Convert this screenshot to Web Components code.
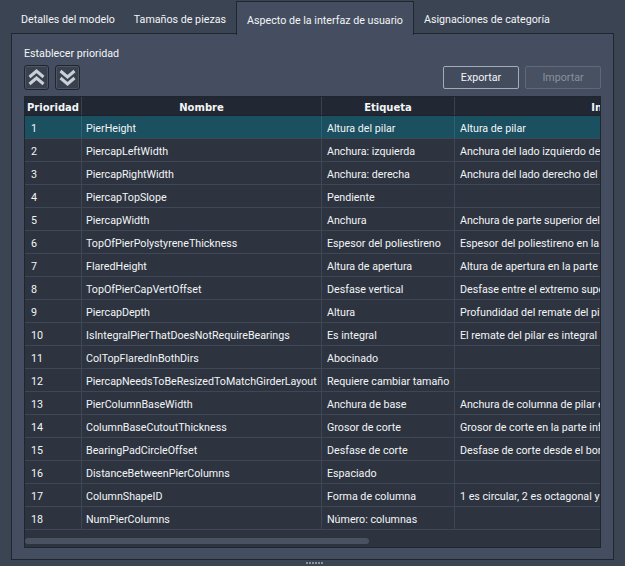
<!DOCTYPE html>
<html>
<head>
<meta charset="utf-8">
<style>
  html, body { margin: 0; height: 100%; }
  body {
    background: #3b4453;
    color: #f3f5f7;
    font: 10.7px/13px Roboto, "Liberation Sans", sans-serif;
    overflow: hidden;
  }
</style>
</head>
<body>
<app-window>
  <tab-item slot="tabs" style="--tab-end: 8px">Detalles del modelo</tab-item>
  <tab-item slot="tabs" style="--tab-end: 9px">Tamaños de piezas</tab-item>
  <tab-item slot="tabs" active>Aspecto de la interfaz de usuario</tab-item>
  <tab-item slot="tabs" style="--tab-start: 9px">Asignaciones de categoría</tab-item>
  <priority-toolbar></priority-toolbar>
  <data-grid></data-grid>
</app-window>

<script>
const rows = [
  ["1", "PierHeight", "Altura del pilar", "Altura de pilar"],
  ["2", "PiercapLeftWidth", "Anchura: izquierda", "Anchura del lado izquierdo del remate"],
  ["3", "PiercapRightWidth", "Anchura: derecha", "Anchura del lado derecho del remate"],
  ["4", "PiercapTopSlope", "Pendiente", ""],
  ["5", "PiercapWidth", "Anchura", "Anchura de parte superior del remate"],
  ["6", "TopOfPierPolystyreneThickness", "Espesor del poliestireno", "Espesor del poliestireno en la parte superior"],
  ["7", "FlaredHeight", "Altura de apertura", "Altura de apertura en la parte superior"],
  ["8", "TopOfPierCapVertOffset", "Desfase vertical", "Desfase entre el extremo superior del pilar"],
  ["9", "PiercapDepth", "Altura", "Profundidad del remate del pilar"],
  ["10", "IsIntegralPierThatDoesNotRequireBearings", "Es integral", "El remate del pilar es integral"],
  ["11", "ColTopFlaredInBothDirs", "Abocinado", ""],
  ["12", "PiercapNeedsToBeResizedToMatchGirderLayout", "Requiere cambiar tamaño", ""],
  ["13", "PierColumnBaseWidth", "Anchura de base", "Anchura de columna de pilar en la base"],
  ["14", "ColumnBaseCutoutThickness", "Grosor de corte", "Grosor de corte en la parte inferior"],
  ["15", "BearingPadCircleOffset", "Desfase de corte", "Desfase de corte desde el borde"],
  ["16", "DistanceBetweenPierColumns", "Espaciado", ""],
  ["17", "ColumnShapeID", "Forma de columna", "1 es circular, 2 es octagonal y 3 es cuadrada"],
  ["18", "NumPierColumns", "Número: columnas", ""]
];

class AppWindow extends HTMLElement {
  constructor() {
    super();
    this.attachShadow({ mode: "open" });
    this.shadowRoot.innerHTML = `
      <style>
        :host { display: block; height: 566px; padding: 1px 11px 0 11px; box-sizing: border-box; position: relative; }
        .tabs { display: flex; gap: 1px; height: 33px; position: relative; z-index: 1; }
        .panel {
          height: 527px;
          box-sizing: border-box;
          margin-top: -1px;
          background: #454e60;
          border: 1px solid #20262f;
          padding: 12px 12px 10px 12px;
          display: flex;
          flex-direction: column;
        }
        .grip {
          position: absolute; left: 306px; top: 562px; width: 17px; height: 2px;
          background: repeating-linear-gradient(90deg, #8a93a0 0 2px, transparent 2px 3px);
        }
      </style>
      <div class="tabs"><slot name="tabs"></slot></div>
      <div class="panel"><slot></slot></div>
      <div class="grip"></div>`;
  }
}

class TabItem extends HTMLElement {
  constructor() {
    super();
    this.attachShadow({ mode: "open" });
    this.shadowRoot.innerHTML = `
      <style>
        :host { display: flex; align-items: center; padding: 4px var(--tab-end, 10px) 0 var(--tab-start, 10px); white-space: nowrap; box-sizing: border-box; height: 33px; }
        :host([active]) {
          background: #454e60;
          border: 1px solid #20262f;
          border-bottom: 0;
          height: 34px;
          padding: 3px 10px 0 10px;
        }
      </style>
      <slot></slot>`;
  }
}

class IconButton extends HTMLElement {
  constructor() {
    super();
    this.attachShadow({ mode: "open" });
    const d = this.getAttribute("dir") === "down"
      ? "M3.5 4 L10.5 10 L17.5 4 M3.5 11 L10.5 17 L17.5 11"
      : "M3.5 10 L10.5 4 L17.5 10 M3.5 17 L10.5 11 L17.5 17";
    this.shadowRoot.innerHTML = `
      <style>
        :host { display: block; width: 25px; height: 25px; box-sizing: border-box; background: #3a414e; border: 1px solid #20262f; border-radius: 3px; box-shadow: inset 0 0 0 1px #4d5667; }
        svg { display: block; margin: 1px; }
      </style>
      <svg width="21" height="21" viewBox="0 0 21 21" fill="none" stroke="#c9d0d9" stroke-width="3"><path d="${d}"/></svg>`;
  }
}

class TextButton extends HTMLElement {
  constructor() {
    super();
    this.attachShadow({ mode: "open" });
    this.shadowRoot.innerHTML = `
      <style>
        :host { display: flex; align-items: center; justify-content: center; width: 76px; height: 23px; box-sizing: border-box; border: 1px solid #a4abb5; border-radius: 2px; background: #434c5d; }
        :host([disabled]) { color: #87909d; border-color: #5f6878; background: #485162; }
      </style>
      <slot></slot>`;
  }
}

class PriorityToolbar extends HTMLElement {
  constructor() {
    super();
    this.attachShadow({ mode: "open" });
    this.shadowRoot.innerHTML = `
      <style>
        :host { display: block; }
        .title { height: 13px; padding: 1px 0 5px; }
        .bar { display: flex; align-items: flex-start; gap: 6px; height: 31px; }
        .spacer { flex: 1; }
        .text { display: flex; gap: 6px; margin-top: 1px; }
      </style>
      <div class="title">Establecer prioridad</div>
      <div class="bar">
        <icon-button dir="up"></icon-button>
        <icon-button dir="down"></icon-button>
        <div class="spacer"></div>
        <div class="text">
          <text-button>Exportar</text-button>
          <text-button disabled>Importar</text-button>
        </div>
      </div>`;
  }
}

class DataGrid extends HTMLElement {
  constructor() {
    super();
    this.attachShadow({ mode: "open" });
    this.shadowRoot.innerHTML = `
      <style>
        :host { display: block; width: 577px; height: 452px; box-sizing: border-box; background: #2d3440; border: 1px solid #20262f; position: relative; overflow: hidden; }
        .row { display: grid; grid-template-columns: 57px 240px 133px 341px; width: 771px; height: 23px; box-sizing: border-box; border-bottom: 1px solid #3f4756; }
        .row > div { box-sizing: border-box; padding: 6px 0 0 5px; white-space: nowrap; overflow: hidden; border-right: 1px solid #3f4756; }
        .row > div:first-child { padding-left: 6px; }
        .row > div:nth-child(2) { padding-left: 4px; }
        .head { height: 19px; background: #222833; border-bottom: 1px solid #1c2129; font: bold 10px/13px "DejaVu Sans", sans-serif; }
        .head > div { text-align: center; padding: 4px 0 0 !important; border-right: 1px solid #39414f; }
        .sel { background: #1b5060; }
        .sel > div { border-right-color: #2d6272; }
        .track { position: absolute; left: 0; top: 441px; width: 344px; height: 6px; border-radius: 3px; background: #4a5262; }
      </style>
      <div class="row head"><div>Prioridad</div><div>Nombre</div><div>Etiqueta</div><div>Información</div></div>
      <div id="body"></div>
      <div class="track"></div>`;
    const body = this.shadowRoot.getElementById("body");
    rows.forEach((cells, i) => {
      const row = document.createElement("div");
      row.className = i === 0 ? "row sel" : "row";
      for (const text of cells) {
        const cell = document.createElement("div");
        cell.textContent = text;
        row.appendChild(cell);
      }
      body.appendChild(row);
    });
  }
}

customElements.define("app-window", AppWindow);
customElements.define("tab-item", TabItem);
customElements.define("icon-button", IconButton);
customElements.define("text-button", TextButton);
customElements.define("priority-toolbar", PriorityToolbar);
customElements.define("data-grid", DataGrid);
</script>
</body>
</html>
